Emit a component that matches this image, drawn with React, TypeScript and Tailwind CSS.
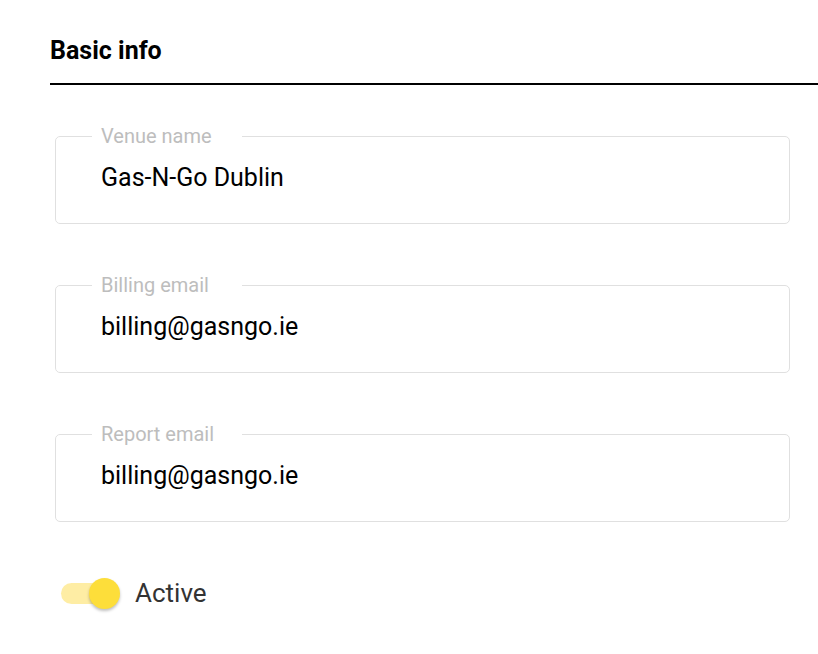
import React from "react";

const fields = [
  { label: "Venue name", value: "Gas-N-Go Dublin" },
  { label: "Billing email", value: "billing@gasngo.ie" },
  { label: "Report email", value: "billing@gasngo.ie" },
];

function OutlinedField({ label, value }: { label: string; value: string }) {
  return (
    <fieldset className="border border-[#e0e0e0] rounded-[5px] pl-[36px] pr-4 pb-[30px] m-0">
      <legend className="w-[150px] px-[9px] text-[20px] leading-[20px] text-[#bdbdbd]">{label}</legend>
      <div className="pl-[9px] pt-[17px] text-[25px] leading-[30px] text-black">{value}</div>
    </fieldset>
  );
}

export default function App() {
  return (
    <div className="w-[818px] h-[654px] bg-white overflow-hidden font-['Roboto',sans-serif]">
      <div className="pl-[50px] pt-[36px]">
        <h2 className="text-[25px] leading-[30px] font-bold text-black">Basic info</h2>
        <div className="mt-[17px] h-[2px] bg-black" />
      </div>
      <div className="pl-[55px] pr-[28px] pt-[41px] flex flex-col gap-[51px]">
        {fields.map((f) => (
          <OutlinedField key={f.label} label={f.label} value={f.value} />
        ))}
      </div>
      <div className="pl-[61px] mt-[56px] flex items-center gap-[15px]">
        <div className="relative w-[51px] h-[30px] flex items-center">
          <div className="w-[51px] h-[21px] rounded-full bg-[#fdd835]/45" />
          <div className="absolute left-[28px] top-0 w-[31px] h-[31px] rounded-full bg-[#fdde3a] shadow-[0_2px_3px_rgba(0,0,0,0.25)]" />
        </div>
        <span className="text-[26px] leading-[30px] text-[#333] ml-[8px]">Active</span>
      </div>
    </div>
  );
}
